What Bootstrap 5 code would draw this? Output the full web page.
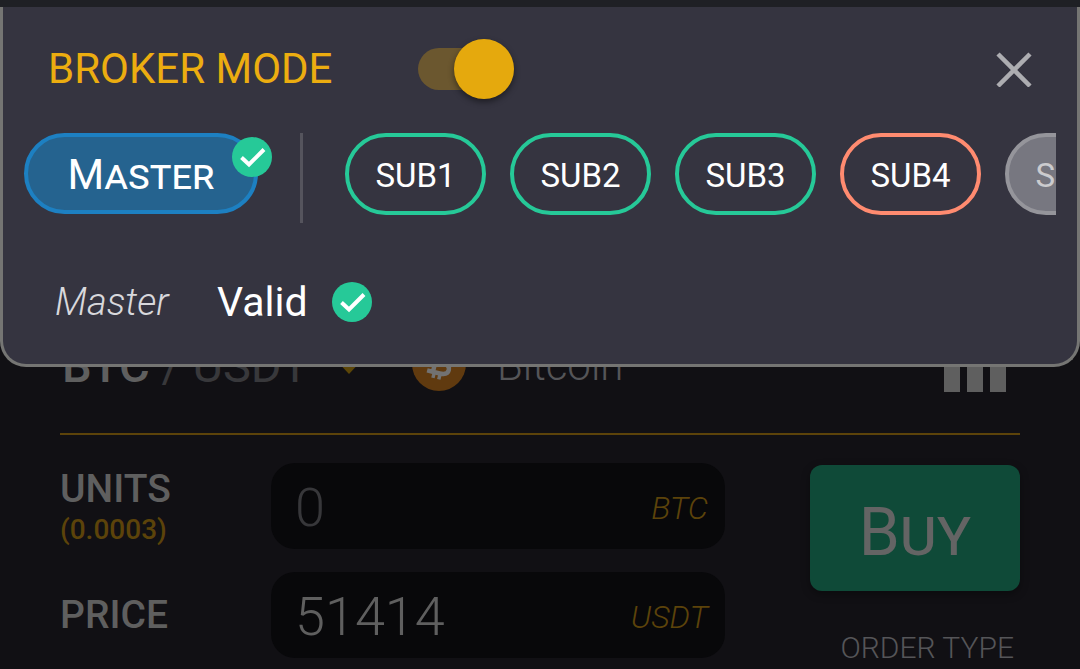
<!DOCTYPE html>
<html lang="en">
<head>
<meta charset="utf-8">
<meta name="viewport" content="width=device-width, initial-scale=1">
<title>Broker mode</title>
<link href="https://cdn.jsdelivr.net/npm/bootstrap@5.3.0/dist/css/bootstrap.min.css" rel="stylesheet">
<style>
  :root { --gold: #ecad10; --green: #26c998; --coral: #ff8b70; --panel: #353440; --dim: #5f5f5f; --dim-gold: #5c430a; }
  body { font-family: Roboto, "Liberation Sans", sans-serif; background: #111014; color: var(--dim); min-height: 100vh; overflow: hidden; }
  h1, h2, p { margin: 0; }

  /* account sheet */
  .sheet-top { background: #1f2025; height: 7px; }
  .sheet-body { border: 3px solid #757573; border-top: 0; border-radius: 0 0 26px 26px; background: var(--panel); padding: 32px 21px; }
  .sheet-head { height: 60px; padding: 0 24px 0 24px; }
  .sheet-title { color: var(--gold); font-size: 42px; line-height: 60px; font-weight: 400; width: 370px; }
  .mode-switch { appearance: none; position: relative; width: 96px; height: 42px; border-radius: 21px; background: #6b572f; margin: 0; }
  .mode-switch::before { content: ""; position: absolute; right: 0; top: -9px; width: 60px; height: 60px; border-radius: 50%; background: #e5a90d; box-shadow: 0 3px 6px rgba(0,0,0,.45); }
  .close-x { width: 36px; height: 36px; background: none; border: 0; padding: 0; }
  .accounts { margin-top: 34px; height: 90px; }
  .pill { height: 82px; border-radius: 41px; border: 4px solid var(--green); background: none; color: #fff; font-size: 33px; line-height: 40px; padding: 4px 0 0; width: 141px; }
  .pill-coral { border-color: var(--coral); }
  .pill-off { background: #777780; border-color: #95959b; color: #cbcbce; }
  .pill-master { width: 234px; height: 81px; background: #25638f; border-color: #1d80c2; font-size: 42px; font-variant: small-caps; padding-top: 2px; }
  .tick { width: 40px; height: 40px; }
  .pill-tick { top: 4px; right: -14px; }
  .rule-v { width: 3px; background: #55545d; margin: 0 42px; }
  .status { margin-top: 49px; height: 60px; padding-left: 31px; line-height: 60px; color: #fff; font-size: 41px; }
  .status-name { font-size: 38px; font-style: italic; font-weight: 300; color: #d8d8dc; width: 162px; }

  /* trade form */
  .trade { padding: 336px 60px 0; }
  .pair { height: 97px; }
  .pair-row { height: 56px; }
  .pair-name { font-size: 47px; line-height: 60px; font-weight: 500; padding: 4px 0 0 2px; width: 282px; }
  .pair-quote { color: #38383b; font-weight: 400; }
  .coin { margin-left: 52px; }
  .coin-name { font-size: 42px; line-height: 56px; font-weight: 300; color: #555558; margin-left: 31px; padding-top: 4px; }
  .bars { margin-right: 14px; }
  .rule-h { height: 2px; background: var(--dim-gold); }
  .form-area { padding-top: 28px; }
  .fields { gap: 23px; min-width: 0; }
  .trade-label { width: 211px; font-size: 39px; line-height: 40px; font-weight: 500; }
  .trade-hint { font-size: 28px; line-height: 42px; color: var(--dim-gold); }
  .hinted { height: 86px; padding-top: 6px; }
  .field { height: 86px; min-width: 0; border-radius: 24px; background: #08080a; padding: 0 17px 0 24px; }
  .field input { width: 0; background: none; border: 0; outline: 0; color: var(--dim); font-size: 54px; font-weight: 300; line-height: 70px; padding: 4px 0 0; }
  .field input::placeholder { color: #37373a; opacity: 1; }
  .unit { font-size: 32px; font-style: italic; font-weight: 300; color: var(--dim-gold); padding-top: 4px; }
  .side { width: 210px; margin-left: 85px; padding-top: 2px; }
  .buy { height: 126px; border: 0; border-radius: 12px; background: #0f4a38; color: #646464; font-size: 66px; font-variant: small-caps; line-height: 80px; padding: 10px 0 0; box-shadow: 0 3px 8px rgba(0,0,0,.35); }
  .order-type { font-size: 30px; line-height: 36px; font-weight: 300; color: #555558; margin-top: 39px; padding-right: 6px; }
</style>
</head>
<body class="position-relative">
<svg class="d-none" xmlns="http://www.w3.org/2000/svg">
  <symbol id="tick" viewBox="0 0 40 40"><circle cx="20" cy="20" r="20" fill="#26c998"/><path d="M9.500 20.500 17 27.500 32 12.500" fill="none" stroke="#fff" stroke-width="4"/></symbol>
</svg>

<main class="trade">
  <div class="pair">
    <div class="pair-row d-flex align-items-center">
      <h2 class="pair-name text-nowrap">BTC <span class="pair-quote">/ USDT</span></h2>
      <svg width="18" height="20" viewBox="0 0 18 20" aria-hidden="true"><path d="M-10 2H24L7 20Z" fill="#5c4608"/></svg>
      <svg class="coin" width="54" height="54" viewBox="0 0 54 54" role="img" aria-label="Bitcoin logo"><circle cx="27" cy="27" r="27" fill="#603a0f"/><g transform="rotate(14 27 27)" fill="none" stroke="#727272"><path d="M17 15H29Q36 15 36 20Q36 25 29 25H23M29 25Q38 25 38 30.500Q38 36 30 36H17M23 15V36" stroke-width="4.500"/><path d="M24 9V15M31 9V15M24.500 36V42M30.500 36V42" stroke-width="3.500"/></g></svg>
      <span class="coin-name">Bitcoin</span>
      <svg class="bars ms-auto" width="62" height="56" viewBox="0 0 62 56" role="img" aria-label="Chart"><path d="M0 18H16V56H0ZM23 0H39V56H23ZM46 10H62V56H46Z" fill="#5f5f5f"/></svg>
    </div>
  </div>
  <div class="rule-h"></div>

  <form class="form-area d-flex">
    <div class="fields d-flex flex-column flex-grow-1">
      <div class="d-flex align-items-center">
        <label class="trade-label hinted flex-shrink-0" for="units">UNITS<span class="trade-hint d-block">(0.0003)</span></label>
        <div class="field d-flex align-items-center flex-grow-1"><input class="flex-grow-1" id="units" type="text" placeholder="0"><span class="unit">BTC</span></div>
      </div>
      <div class="d-flex align-items-center">
        <label class="trade-label flex-shrink-0" for="price">PRICE</label>
        <div class="field d-flex align-items-center flex-grow-1"><input class="flex-grow-1" id="price" type="text" value="51414"><span class="unit">USDT</span></div>
      </div>
    </div>
    <div class="side flex-shrink-0">
      <button class="buy w-100" type="button">Buy</button>
      <p class="order-type text-end text-nowrap">ORDER TYPE</p>
    </div>
  </form>
</main>

<section class="position-absolute top-0 start-0 w-100" role="dialog" aria-labelledby="mode-title">
  <div class="sheet-top"></div>
  <div class="sheet-body">
    <div class="sheet-head d-flex align-items-center">
      <h1 class="sheet-title text-nowrap"><label id="mode-title" for="mode">BROKER MODE</label></h1>
      <input class="mode-switch" id="mode" type="checkbox" role="switch" checked>
      <button class="close-x ms-auto d-flex" type="button" aria-label="Close"><svg width="36" height="36" viewBox="0 0 36 36"><path d="M2 3 34 35M34 3 2 35" stroke="#adadb1" stroke-width="4.500"/></svg></button>
    </div>
    <div class="accounts d-flex overflow-hidden">
      <div class="position-relative flex-shrink-0">
        <button class="pill pill-master" type="button">Master</button>
        <svg class="tick pill-tick position-absolute" aria-hidden="true"><use href="#tick"/></svg>
      </div>
      <div class="rule-v flex-shrink-0"></div>
      <div class="d-flex gap-4">
        <button class="pill flex-shrink-0" type="button">SUB1</button>
        <button class="pill flex-shrink-0" type="button">SUB2</button>
        <button class="pill flex-shrink-0" type="button">SUB3</button>
        <button class="pill pill-coral flex-shrink-0" type="button">SUB4</button>
        <button class="pill pill-off flex-shrink-0" type="button">SUB5</button>
      </div>
    </div>
    <div class="status d-flex align-items-center">
      <span class="status-name">Master</span>
      <span>Valid</span>
      <svg class="tick ms-4" role="img" aria-label="Valid"><use href="#tick"/></svg>
    </div>
  </div>
</section>
<script src="https://cdn.jsdelivr.net/npm/bootstrap@5.3.0/dist/js/bootstrap.bundle.min.js"></script>
</body>
</html>
